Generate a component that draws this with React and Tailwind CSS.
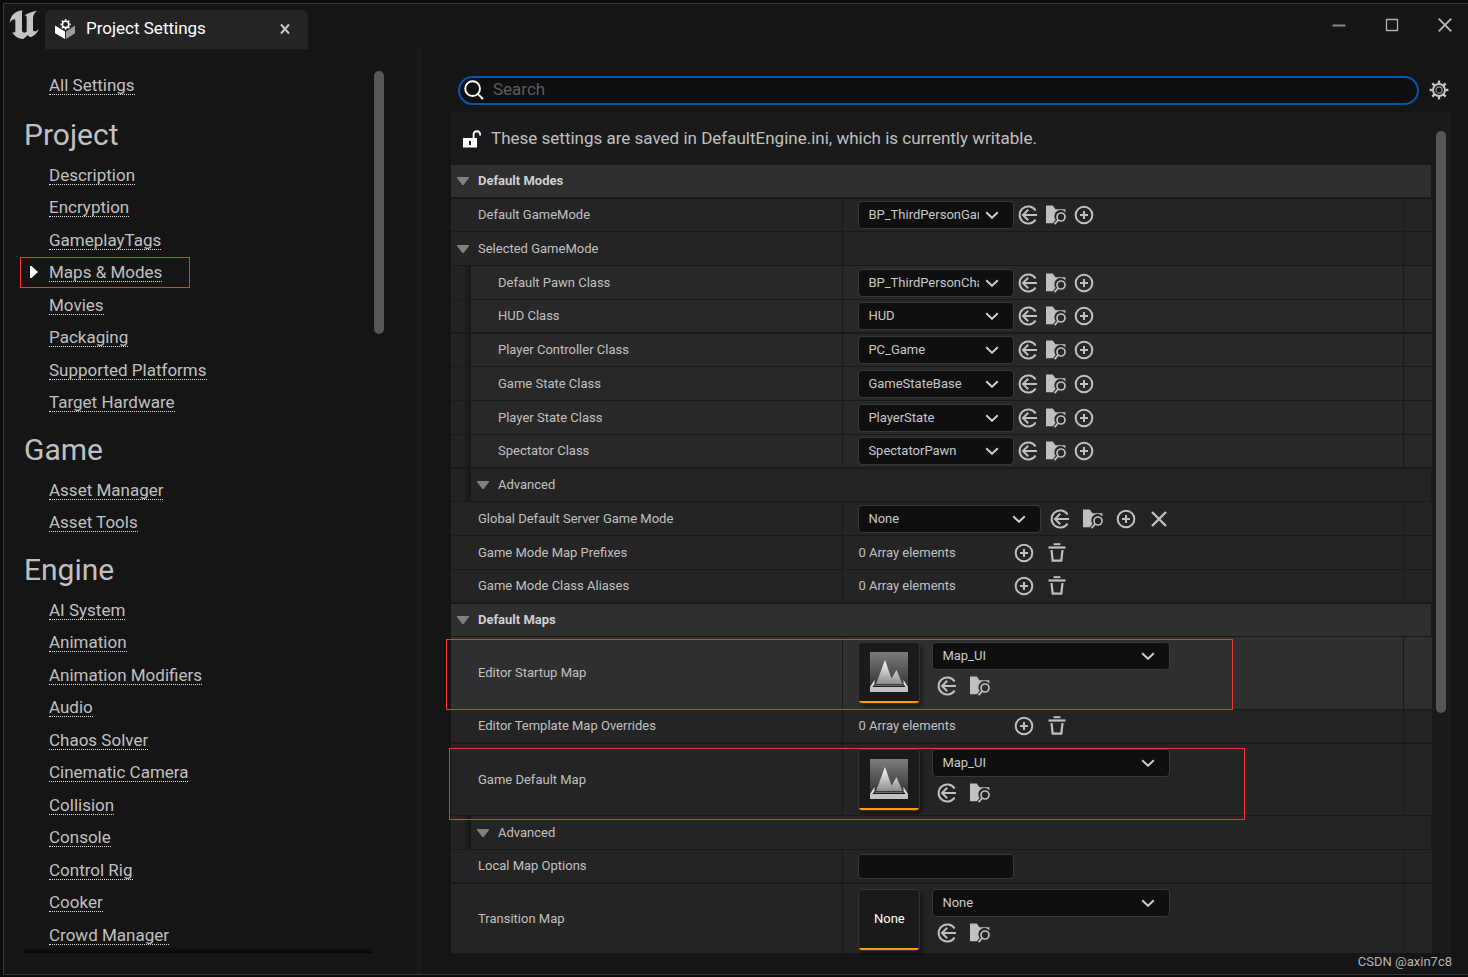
import React from "react";

/* ---------- icons ---------- */

function UnrealLogo() {
  return (
    <svg viewBox="27 30 90 90" className="size-[30px] shrink-0" aria-label="Unreal" role="img">
      <path
        fill="#c4c4c4"
        d="M67 31C46 33 31 47 29 69C33 62 39 58 43 58C45 58 46 60 46 63V92C46 97 42 99 36 97C44 110 57 117 70 117L83 106L91 112C103 108 112 99 117 86C113 91 108 94 104 94C101 94 99 92 99 89V54C99 45 104 38 111 32C97 34 84 39 74 46C78 46 80 49 80 53V94C77 98 74 99 72 98C68 97 66 95 66 91V44C66 39 66 35 67 31Z"
      />
    </svg>
  );
}

const TEETH = [0, 45, 90, 135, 180, 225, 270, 315];

function SettingsBoxIcon() {
  return (
    <svg viewBox="0 0 20 20" className="size-5 shrink-0" aria-hidden="true">
      <path fill="#fff" d="M0 6.6L10 12.4V20L0 14.3Z" />
      <path fill="#9c9c9c" d="M20 6.6L11 12.4V20L20 14.3Z" />
      <circle cx="10.6" cy="5.4" r="6" fill="#242424" />
      <circle cx="10.6" cy="5.4" r="3.1" fill="none" stroke="#fff" strokeWidth="1.6" />
      {TEETH.map((a) => (
        <path key={a} d="M10.6 1.8V.2" stroke="#fff" strokeWidth="1.7" transform={`rotate(${a} 10.6 5.4)`} />
      ))}
    </svg>
  );
}

function GearIcon() {
  return (
    <svg viewBox="0 0 20 20" className="size-5" aria-hidden="true">
      <circle cx="10" cy="10" r="6" fill="none" stroke="#c8c8c8" strokeWidth="1.9" />
      <circle cx="10" cy="10" r="3.1" fill="none" stroke="#a0a0a0" strokeWidth="1.1" />
      {TEETH.map((a) => (
        <path key={a} d="M10 3.8V.6" stroke="#c8c8c8" strokeWidth="2.4" transform={`rotate(${a} 10 10)`} />
      ))}
    </svg>
  );
}

function UseIcon() {
  return (
    <svg viewBox="0 0 20 20" className="size-5" fill="none" stroke="#c0c0c0" strokeWidth="2" aria-hidden="true">
      <path d="M17.6 5.6A8.6 8.6 0 1 0 17.6 14.4" />
      <path d="M19 10H5.2M10.2 4.8L5 10L10.2 15.2" />
    </svg>
  );
}

function BrowseIcon() {
  return (
    <svg viewBox="0 0 20 20" className="size-5" aria-hidden="true">
      <path fill="#c0c0c0" d="M0 .6H6.8L9.4 4.2H19.4V7.4A6 6 0 0 0 9.6 14.8L7 18.2H0Z" />
      <circle cx="15" cy="12" r="4" fill="none" stroke="#c0c0c0" strokeWidth="1.7" />
      <path d="M12.2 15L8.6 19.2" stroke="#c0c0c0" strokeWidth="1.9" />
    </svg>
  );
}

function PlusIcon() {
  return (
    <svg viewBox="0 0 20 20" className="size-5" fill="none" stroke="#c0c0c0" aria-hidden="true">
      <circle cx="10" cy="10" r="8.3" strokeWidth="2" />
      <path d="M10 6V14M6 10H14" strokeWidth="2" />
    </svg>
  );
}

function TrashIcon() {
  return (
    <svg viewBox="0 0 20 20" className="size-5" fill="none" stroke="#c0c0c0" aria-hidden="true">
      <path d="M6.6 1.2H13.4" strokeWidth="2" />
      <path d="M1.5 4.5H18.5" strokeWidth="2.2" />
      <path d="M4.5 7L5.7 17.6H14.3L15.5 7" strokeWidth="2.2" />
    </svg>
  );
}

function CrossIcon() {
  return (
    <svg viewBox="0 0 20 20" className="size-5" fill="none" stroke="#c0c0c0" strokeWidth="2.3" aria-hidden="true">
      <path d="M3 3L17 17M17 3L3 17" />
    </svg>
  );
}

function Chevron() {
  return (
    <svg viewBox="0 0 14 8" className="h-2 w-3.5" fill="none" stroke="#d0d0d0" strokeWidth="1.9" aria-hidden="true">
      <path d="M1.2 1.2L7 6.8L12.8 1.2" />
    </svg>
  );
}

function Expander() {
  return (
    <svg viewBox="0 0 12 8" className="h-2 w-3" aria-hidden="true">
      <path d="M0 0H12V1L6.6 8H5.4L0 1Z" fill="#808080" />
    </svg>
  );
}

function UnlockIcon() {
  return (
    <svg viewBox="0 0 18 18" className="size-[18px] shrink-0" aria-hidden="true">
      <path fill="#fff" fillRule="evenodd" d="M0 8H14V17.5H0ZM6 11V15H8V11Z" />
      <path d="M10.6 8V4A3.3 3.3 0 0 1 17.1 4V5.6" fill="none" stroke="#fff" strokeWidth="1.8" />
    </svg>
  );
}

function LevelIcon() {
  return (
    <svg viewBox="0 0 38 40" className="h-10 w-[38px]" aria-hidden="true">
      <defs>
        <linearGradient id="sky" x1="0" y1="0" x2="0" y2="1">
          <stop offset="0" stopColor="#7c7c7c" />
          <stop offset="1" stopColor="#303030" />
        </linearGradient>
        <linearGradient id="peak" x1="0" y1="0" x2="0" y2="1">
          <stop offset="0" stopColor="#ffffff" />
          <stop offset="1" stopColor="#8c8c8c" />
        </linearGradient>
      </defs>
      <path d="M0 0H38V36H0Z" fill="url(#sky)" />
      <path d="M6 32L15 8L21.5 26.5L26.5 18L32.5 32Z" fill="url(#peak)" />
      <path d="M4.4 27L5 31.5L3.4 34H34.6L33 31.5L33.6 27L38 35H0Z" fill="#1c1c1c" />
      <path d="M4.6 27.5V32L2.4 35H0ZM33.4 27.5V32L35.6 35H38Z" fill="#d8d8d8" />
      <path d="M5 33.4H33" stroke="#707070" strokeWidth="1" />
      <path d="M0 35H38V40H0Z" fill="#c2c2c2" />
    </svg>
  );
}

/* ---------- controls ---------- */

function IconButton({ label, children }) {
  return (
    <button type="button" aria-label={label} className="size-5 shrink-0">
      {children}
    </button>
  );
}

function Combo({ id, value, width }) {
  return (
    <div className={`relative h-7 shrink-0 ${width}`}>
      <select
        id={id}
        defaultValue={value}
        className="h-full w-full appearance-none overflow-hidden rounded border border-[#383838] bg-[#0f0f0f] pr-[34px] pl-[9px] text-[13px] text-[#c8c8c8]"
      >
        <option>{value}</option>
      </select>
      <span className="pointer-events-none absolute inset-y-0 right-[15px] flex items-center">
        <Chevron />
      </span>
    </div>
  );
}

function ClassValue({ id, value }) {
  return (
    <div className="flex items-center gap-2">
      <Combo id={id} value={value} width="w-[156px] -mr-1" />
      <IconButton label="Use selected asset"><UseIcon /></IconButton>
      <IconButton label="Browse to asset"><BrowseIcon /></IconButton>
      <IconButton label="Create new"><PlusIcon /></IconButton>
    </div>
  );
}

function ServerModeValue({ id, value }) {
  return (
    <div className="flex items-center gap-[13px]">
      <Combo id={id} value={value} width="w-[183px] -mr-1" />
      <IconButton label="Use selected asset"><UseIcon /></IconButton>
      <IconButton label="Browse to asset"><BrowseIcon /></IconButton>
      <IconButton label="Create new"><PlusIcon /></IconButton>
      <IconButton label="Clear"><CrossIcon /></IconButton>
    </div>
  );
}

function ArrayValue() {
  return (
    <div className="flex items-center gap-[13px]">
      <span className="w-[143px]">0 Array elements</span>
      <IconButton label="Add element"><PlusIcon /></IconButton>
      <IconButton label="Remove all elements"><TrashIcon /></IconButton>
    </div>
  );
}

function MapValue({ id, value }) {
  return (
    <div className="flex gap-3 self-start pt-[5px]">
      <div className="flex h-[62px] w-[62px] flex-col overflow-hidden rounded border border-[#343434] bg-[#1a1a1a] shadow-[3px_3px_3px_rgba(0,0,0,0.35)]">
        <div className="flex flex-1 items-center justify-center text-white">
          {value === "None" ? "None" : <LevelIcon />}
        </div>
        <div className="h-0.5 bg-[#ff9c00]" />
      </div>
      <div className="flex flex-col gap-1.5">
        <Combo id={id} value={value} width="w-[238px]" />
        <div className="flex gap-[13px] pl-[5px]">
          <IconButton label="Use selected asset"><UseIcon /></IconButton>
          <IconButton label="Browse to asset"><BrowseIcon /></IconButton>
        </div>
      </div>
    </div>
  );
}

function TextValue({ id }) {
  return (
    <input
      id={id}
      type="text"
      className="h-[25px] w-[156px] rounded border border-[#383838] bg-[#0f0f0f] px-2 text-[13px] text-[#c8c8c8]"
    />
  );
}

const VALUES = { class: ClassValue, server: ServerModeValue, array: ArrayValue, map: MapValue, text: TextValue };

/* ---------- property grid ---------- */

const FIRST = "h-[33px] border-b";
const MIDDLE = "h-[34px] border-b";
const LAST = "h-[34px] border-b-2";

const ROWS = [
  { kind: "category", label: "Default Modes", size: LAST },
  { kind: "class", label: "Default GameMode", value: "BP_ThirdPersonGameMode", size: FIRST },
  { kind: "group", label: "Selected GameMode", size: MIDDLE },
  { kind: "class", label: "Default Pawn Class", value: "BP_ThirdPersonCharacter", nested: true, size: MIDDLE },
  { kind: "class", label: "HUD Class", value: "HUD", nested: true, size: LAST },
  { kind: "class", label: "Player Controller Class", value: "PC_Game", nested: true, size: FIRST },
  { kind: "class", label: "Game State Class", value: "GameStateBase", nested: true, size: MIDDLE },
  { kind: "class", label: "Player State Class", value: "PlayerState", nested: true, size: MIDDLE },
  { kind: "class", label: "Spectator Class", value: "SpectatorPawn", nested: true, size: LAST },
  { kind: "advanced", label: "Advanced", size: FIRST },
  { kind: "server", label: "Global Default Server Game Mode", value: "None", size: MIDDLE },
  { kind: "array", label: "Game Mode Map Prefixes", size: MIDDLE },
  { kind: "array", label: "Game Mode Class Aliases", size: LAST },
  { kind: "category", label: "Default Maps", size: FIRST },
  { kind: "map", label: "Editor Startup Map", value: "Map_UI", size: "h-[73px] border-b", hovered: true, mark: "-left-[5px] top-0.5 h-[71px] w-[787px]" },
  { kind: "array", label: "Editor Template Map Overrides", size: LAST },
  { kind: "map", label: "Game Default Map", value: "Map_UI", size: "h-[72px] border-b", mark: "-left-0.5 top-1 h-[72px] w-[796px]" },
  { kind: "advanced", label: "Advanced", size: MIDDLE },
  { kind: "text", label: "Local Map Options", size: LAST },
  { kind: "map", label: "Transition Map", value: "None", size: "h-[69px]" },
];

function Indent() {
  return <div className="w-5 shrink-0 self-stretch bg-linear-to-r from-[#232323] from-60% to-[#181818] to-95%" />;
}

function PropertyRow({ row, id }) {
  const base = `relative flex shrink-0 border-[#1a1a1a] ${row.size}`;

  if (row.kind === "category") {
    return (
      <div className={`${base} mr-px bg-[#2f2f2f]`}>
        <button type="button" className="flex flex-1 items-center gap-[9px] pl-1.5 text-left font-bold text-[#d0d0d0]">
          <Expander />
          {row.label}
        </button>
      </div>
    );
  }

  if (row.kind === "advanced") {
    return (
      <div className={`${base} mr-px bg-[#242424]`}>
        <Indent />
        <button type="button" className="flex flex-1 items-center gap-[9px] pl-1.5 text-left">
          <Expander />
          {row.label}
        </button>
      </div>
    );
  }

  const tone = row.hovered ? "bg-[#2f2f2f]" : row.nested ? "bg-[#282828]" : "bg-[#242424]";
  const Value = VALUES[row.kind];

  return (
    <div className={`${base} ${tone}`}>
      <div className="flex w-2/5 shrink-0 items-center border-r border-[#1a1a1a]">
        {row.nested && <Indent />}
        {row.kind === "group" ? (
          <button type="button" className="flex items-center gap-[9px] pl-1.5">
            <Expander />
            {row.label}
          </button>
        ) : (
          <label htmlFor={id} className="pl-[27px]">{row.label}</label>
        )}
      </div>
      <div className="flex min-w-0 flex-1 items-center pl-[15px]">{Value && <Value id={id} value={row.value} />}</div>
      <div className="w-[29px] shrink-0 border-l border-[#1a1a1a]" />
      {row.mark && <div className={`pointer-events-none absolute z-10 border border-[#f23636] ${row.mark}`} />}
    </div>
  );
}

/* ---------- sidebar ---------- */

const SECTIONS = [
  {
    title: "Project",
    items: ["Description", "Encryption", "GameplayTags", "Maps & Modes", "Movies", "Packaging", "Supported Platforms", "Target Hardware"],
  },
  { title: "Game", items: ["Asset Manager", "Asset Tools"] },
  {
    title: "Engine",
    items: ["AI System", "Animation", "Animation Modifiers", "Audio", "Chaos Solver", "Cinematic Camera", "Collision", "Console", "Control Rig", "Cooker", "Crowd Manager"],
  },
];

function NavLink({ label, active }) {
  return (
    <>
      <span className="w-[45px] shrink-0 pt-0.5 pl-[26px]">
        {active && (
          <svg viewBox="0 0 8 12" className="h-3 w-2" aria-hidden="true">
            <path d="M0 0H1.5L8 6L1.5 12H0Z" fill="#fff" />
          </svg>
        )}
      </span>
      <a href="#" className="border-b border-dotted border-[#e0e0e0] leading-[17px] whitespace-nowrap">
        {label}
      </a>
      {active && <span className="pointer-events-none absolute top-px left-4 h-[31px] w-[170px] border border-[#f23636]" />}
    </>
  );
}

function Sidebar() {
  return (
    <nav className="flex w-[413px] shrink-0 pb-[21px] text-[17px] text-[#c0c0c0]">
      <div className="relative min-h-0 flex-1 overflow-hidden pt-5">
        <div className="flex h-[35px] items-start pt-2">
          <NavLink label="All Settings" />
        </div>
        {SECTIONS.map((section) => (
          <section key={section.title}>
            <h2 className="h-[55px] pt-[13px] pl-5 text-[30px] leading-9">{section.title}</h2>
            <ul>
              {section.items.map((item) => (
                <li key={item} className="relative flex items-start pt-2 odd:h-8 even:h-[33px]">
                  <NavLink label={item} active={item === "Maps & Modes"} />
                </li>
              ))}
            </ul>
          </section>
        ))}
        <div className="pointer-events-none absolute right-0.5 bottom-0 left-5 h-1.5 bg-linear-to-b from-transparent to-black/70" />
      </div>
      <div className="w-[43px] shrink-0 pt-[22px]">
        <div className="h-[263px] w-2.5 rounded-full bg-[#575757]" />
      </div>
    </nav>
  );
}

/* ---------- window ---------- */

function TitleBar() {
  return (
    <header className="flex h-[45px] shrink-0 pl-[5px]">
      <div className="pt-1.5">
        <UnrealLogo />
      </div>
      <div className="mt-1.5 ml-1.5 flex w-[263px] items-center rounded-t-md bg-[#242424] pr-[17px] pb-0.5 pl-2.5 text-[17px] text-white">
        <SettingsBoxIcon />
        <span className="flex-1 pl-[11px]">Project Settings</span>
        <button type="button" aria-label="Close tab">
          <svg viewBox="0 0 12 12" className="size-3" stroke="#c8c8c8" strokeWidth="1.9" aria-hidden="true">
            <path d="M2 1.5L10 10.5M10 1.5L2 10.5" />
          </svg>
        </button>
      </div>
      <div className="ml-auto flex h-[42px] items-center gap-[39px] pr-4">
        <button type="button" aria-label="Minimize">
          <svg viewBox="0 0 14 14" className="size-3.5" aria-hidden="true">
            <path d="M.5 7.5H13.5" stroke="#8a8a8a" strokeWidth="2" />
          </svg>
        </button>
        <button type="button" aria-label="Maximize">
          <svg viewBox="0 0 14 14" className="size-3.5" fill="none" aria-hidden="true">
            <path d="M1.5 1.5H12.5V12.5H1.5Z" stroke="#b0b0b0" strokeWidth="1.3" />
          </svg>
        </button>
        <button type="button" aria-label="Close">
          <svg viewBox="0 0 14 14" className="size-3.5" aria-hidden="true">
            <path d="M.7 .7L13.3 13.3M13.3 .7L.7 13.3" stroke="#b8b8b8" strokeWidth="1.8" />
          </svg>
        </button>
      </div>
    </header>
  );
}

export default function App() {
  return (
    <div className="relative flex h-screen bg-[#0b0b0b] pt-[3px] pb-0.5 pl-[3px] font-['Roboto','Liberation_Sans',sans-serif] text-[13px] text-[#c0c0c0]">
      <div className="flex min-w-0 flex-1 flex-col overflow-hidden border-y border-l border-[#363636] bg-[#151515]">
        <TitleBar />
        <div className="flex min-h-0 flex-1">
          <Sidebar />
          <div className="w-1 shrink-0 bg-[#1a1a1a]" />
          <main className="flex min-w-0 flex-1 flex-col overflow-hidden pt-[27px] pr-[17px] pb-[21px] pl-[30px]">
            <div className="flex items-center gap-2.5 pl-[7px]">
              <label className="flex h-[29px] flex-1 items-center gap-[9px] rounded-full border-2 border-[#0058b4] bg-[#0f0f0f] pr-4 pb-px pl-1">
                <svg viewBox="0 0 20 20" className="size-5 shrink-0" fill="none" stroke="#fff" strokeWidth="1.9" aria-hidden="true">
                  <circle cx="8.6" cy="8.6" r="7.4" />
                  <path d="M13.8 13.8L19 19" />
                </svg>
                <input
                  type="search"
                  aria-label="Search"
                  placeholder="Search"
                  className="min-w-0 flex-1 pb-0.5 text-[17px] leading-5 outline-none placeholder:text-[#5c5c5c]"
                />
              </label>
              <button type="button" aria-label="Settings" className="mr-0.5 pb-px">
                <GearIcon />
              </button>
            </div>
            <div className="mt-[7px] flex min-h-0 flex-1 bg-[#1a1a1a]">
              <div className="flex min-w-0 flex-1 flex-col">
                <p className="flex h-[53px] shrink-0 items-center gap-2.5 pt-px pl-3 text-[17px]">
                  <UnlockIcon />
                  These settings are saved in DefaultEngine.ini, which is currently writable.
                </p>
                {ROWS.map((row, i) => (
                  <PropertyRow key={i} row={row} id={`property-${i}`} />
                ))}
              </div>
              <div className="w-[19px] shrink-0 pt-[19px] pl-1">
                <div className="h-[582px] w-2.5 rounded-full bg-[#575757]" />
              </div>
            </div>
          </main>
        </div>
      </div>
      <span className="absolute right-4 bottom-[7px] text-[13px] leading-4 text-[#b4b4b4]">CSDN @axin7c8</span>
    </div>
  );
}
